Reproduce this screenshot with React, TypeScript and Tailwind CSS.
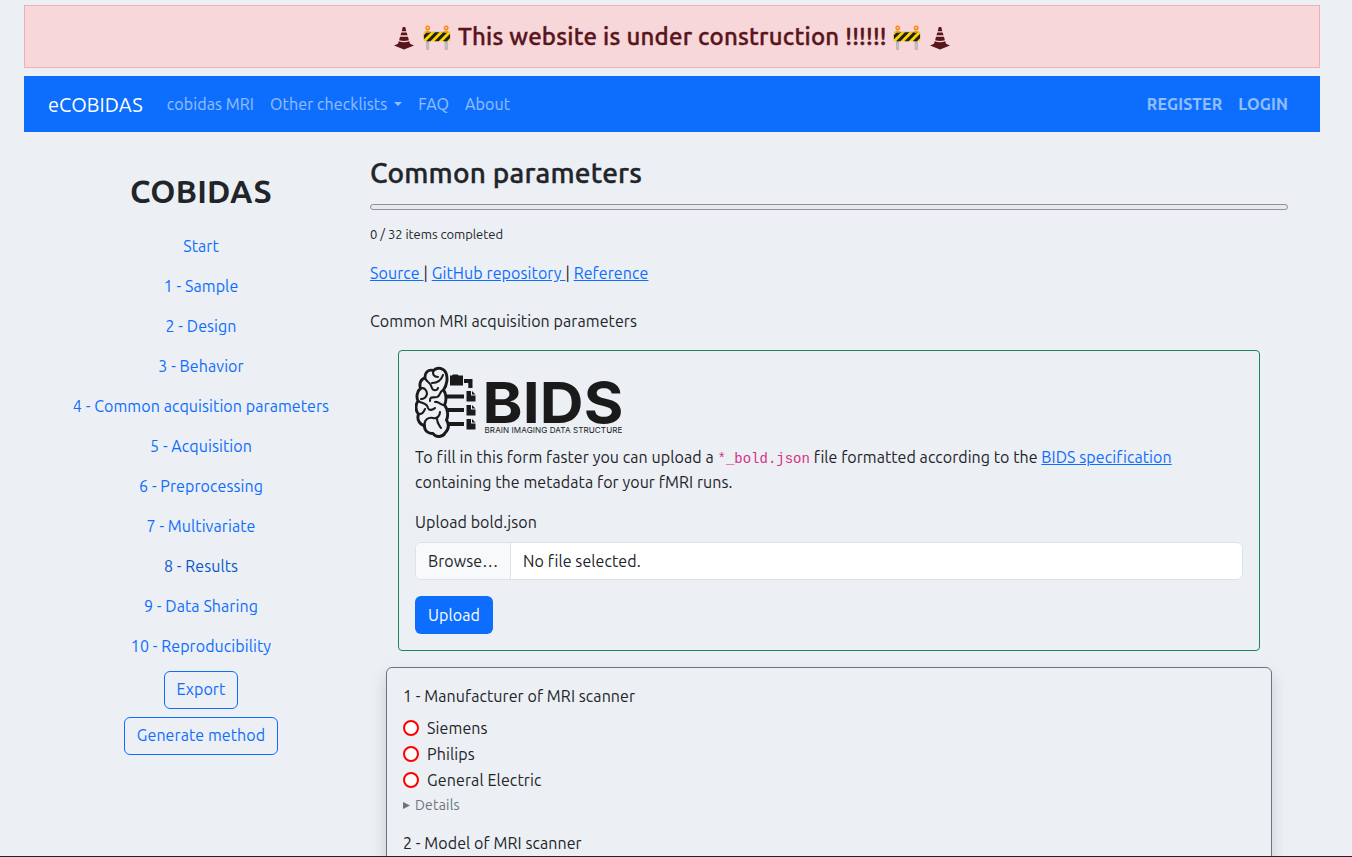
import React from "react";

const sections = [
  "Start",
  "1 - Sample",
  "2 - Design",
  "3 - Behavior",
  "4 - Common acquisition parameters",
  "5 - Acquisition",
  "6 - Preprocessing",
  "7 - Multivariate",
  "8 - Results",
  "9 - Data Sharing",
  "10 - Reproducibility",
];

function Cone() {
  return (
    <svg width="20" height="24" viewBox="0 0 20 24" fill="currentColor" className="relative top-px">
      <path d="M8.800 1h2.400l1.100 4.200H7.700zM7.300 6.500h5.400l.8 2.700h-7zM5.200 14.200 6 10.700h8l.8 3.500q-4.800 1.400-9.600 0z" />
      <path d="M4.800 15.300q5.200 1.800 10.400 0L16 17.800l4 1.700-10 4L0 19.500l4-1.700z" />
    </svg>
  );
}

function FileIcon({ y }: { y: number }) {
  return (
    <g>
      <path d={`M51.500 ${y}h4.500v4.500h4.500v6h-9z`} />
      <path d={`M57 ${y}l3.500 3.500h-3.500z`} />
    </g>
  );
}

function BidsLogo() {
  return (
    <svg width="210" height="74" viewBox="0 0 210 74" fill="#1a1a1a" className="relative -top-px block">
      <g fill="none" stroke="#1a1a1a" strokeWidth="2.900" strokeLinecap="round" strokeLinejoin="round">
        <path d="M31 7C29 2 22 .5 18.500 4.500C13 3 9.500 7 10 12C5.500 13 4 18 5.500 22.500C2 25 1 31 3 35C0 39 .5 45 3.500 48C1.500 54 5 59 9.500 59.500C9 65 14 68 18 67.500C21 72 28 71 30 67C34 63 34 58 31.500 54C34 49 32 42 29.500 39C32 34 31 27 28.500 24C32 19 33 12 31 7Z" />
        <g strokeWidth="2.100">
          <path d="M18.500 4.500C17 8 19 11 23 11M28 9C26 15 22 17 17 17M10 12C12 17 16 16 17 22C18 25 22 25 23 22" />
          <path d="M5.500 22.500C9 21 12 24 12 28C11 32 8 33 6 33M28.500 24C24 25 26 30 22 31C17 32 15 30 15 35" />
          <path d="M3 35C8 38 12 37 13 42C14 45 18 44 20 42M29.500 39C25 39 24 35 20 36M3.500 48C8 49 9 45 10 43" />
          <path d="M9.500 59.500C9 54 13 51 18 52C22 53 25 50 25 46M22 53C22 57 24 59 26 62" />
        </g>
      </g>
      <path d="M35 10.500v-1h2l.8-1h5l.8 1H48v10H35zM49 13h8.500v9h-4.200v-5H49z" />
      <path d="M31 28.500h18v4H31zM32 42h17v4H32zM32 56h17v4H32z" />
      <FileIcon y={25} />
      <FileIcon y={39} />
      <FileIcon y={53} />
      <text x="67.500" y="56.500" fontFamily="Inter, sans-serif" fontWeight="700" fontSize="57" textLength="141" lengthAdjust="spacingAndGlyphs">
        BIDS
      </text>
      <text x="69.500" y="66.800" fontFamily="Inter, sans-serif" fontWeight="400" fontSize="8" textLength="138" lengthAdjust="spacingAndGlyphs">
        BRAIN IMAGING DATA STRUCTURE
      </text>
    </svg>
  );
}

export default function App() {
  return (
    <div className="flex h-[857px] flex-col overflow-hidden bg-[#eceff4] font-['Ubuntu','Noto_Sans',sans-serif] text-base tracking-[0.08px] text-[#212529]">
      <div className="h-[856px] shrink-0 overflow-hidden pr-8 pl-6 pt-[5px]">
        <div className="flex h-[63px] items-center justify-center border border-[#f1aeb5] bg-[#f8d7da] text-2xl font-medium tracking-[0.22px] text-[#58151c]">
          <Cone />
          <span className="ml-[9px] w-7 text-2xl tracking-normal -indent-px">🚧</span>
          <h1 className="mx-1.5 w-[430px] pl-px whitespace-nowrap [-webkit-text-stroke:0.4px_#58151c]">This website is under construction !!!!!!</h1>
          <span className="mr-[9px] w-7 text-2xl tracking-normal -indent-px">🚧</span>
          <Cone />
        </div>

        <nav className="mt-2 flex h-14 items-center bg-[#0d6efd] px-6 text-white/55">
          <a className="mr-6 pt-0.5 text-xl text-white">eCOBIDAS</a>
          <div className="flex gap-4 tracking-[0.1px]">
            <a>cobidas MRI</a>
            <a className="flex items-center gap-[7px]">
              Other checklists
              <i className="border-x-[4.500px] border-t-[4.500px] border-x-transparent border-t-white/55" />
            </a>
            <a>FAQ</a>
            <a>About</a>
          </div>
          <div className="mr-2 ml-auto flex gap-4 font-bold tracking-[0.16px]">
            <a>REGISTER</a>
            <a>LOGIN</a>
          </div>
        </nav>

        <div className="flex">
          <aside className="flex w-[354px] shrink-0 flex-col items-center pt-10 text-[#0d6efd]">
            <h2 className="mb-[15px] text-[32px] leading-[39px] font-bold tracking-[0.3px] text-[#212529]">COBIDAS</h2>
            {sections.map((s) => (
              <a key={s} className={s.startsWith("8") ? "py-2 text-[#0a58ca]" : "py-2"}>
                {s}
              </a>
            ))}
            <button className="mt-[5px] h-[38px] w-[74px] rounded-md border border-[#0d6efd] pb-0.5">Export</button>
            <button className="mt-2 h-[38px] w-[154px] rounded-md border border-[#0d6efd] pb-0.5">Generate method</button>
          </aside>

          <main className="-ml-2 w-[902px] grow pt-6 pr-8">
            <h2 className="text-[28px] leading-[34px] font-medium tracking-[0.18px] [-webkit-text-stroke:0.4px_#212529]">Common parameters</h2>
            <div className="mt-3.5 h-1.5 rounded-full border border-[#8f8f9d] bg-[#e9e9ed]" />
            <p className="mt-3.5 text-[13px] leading-5 tracking-[-0.04px]">0 / 32 items completed</p>
            <p className="mt-[17px] leading-6 tracking-[0.1px]">
              <a className="whitespace-pre text-[#0d6efd] underline">Source </a>|{" "}
              <a className="whitespace-pre text-[#0d6efd] underline">GitHub repository </a>|{" "}
              <a className="text-[#0d6efd] underline">Reference</a>
            </p>
            <p className="mt-6">Common MRI acquisition parameters</p>

            <section className="mx-7 mt-[17px] h-[301px] rounded border border-[#198754] px-4 pt-4">
              <BidsLogo />
              <p className="mt-1 leading-[25px]">
                To fill in this form faster you can upload a{" "}
                <code className="font-['Liberation_Mono',monospace] text-sm tracking-normal text-[#d63384]">*_bold.json</code>{" "}
                <span className="tracking-[0.05px]">file formatted according to the </span>
                <a className="text-[#0d6efd] underline">BIDS specification</a>
                <br />
                containing the metadata for your fMRI runs.
              </p>
              <p className="mt-[15px]">Upload bold.json</p>
              <div className="mt-2 flex h-[38px] items-center overflow-hidden rounded-md border border-[#dee2e6] bg-white">
                <span className="flex h-full w-[95px] items-center border-r border-[#dee2e6] bg-[#f8f9fa] pl-3">Browse…</span>
                <span className="pl-3">No file selected.</span>
              </div>
              <button className="mt-4 h-[38px] w-[78px] rounded-md bg-[#0d6efd] text-white">Upload</button>
            </section>

            <section className="mx-4 mt-4 h-[400px] rounded-md border border-[#6c757d] px-4 pt-4 shadow-[0_8px_16px_rgba(0,0,0,0.15)]">
              <p>1 - Manufacturer of MRI scanner</p>
              <div className="mt-[7px] flex flex-col">
                {["Siemens", "Philips", "General Electric"].map((o) => (
                  <label key={o} className="flex h-[26px] items-center gap-2 tracking-[0.12px]">
                    <i className="size-4 rounded-full border-2 border-[#ff0000] bg-white" />
                    {o}
                  </label>
                ))}
              </div>
              <p className="flex h-6 items-center gap-[5px] text-sm tracking-[0.2px] text-[#6c757d]">
                <svg width="7" height="7" viewBox="0 0 7 7" fill="currentColor">
                  <path d="M0 0l7 3.500-7 3.500z" />
                </svg>
                Details
              </p>
              <p className="mt-3.5">2 - Model of MRI scanner</p>
            </section>
          </main>
        </div>
      </div>
      <div className="h-px shrink-0 bg-[#3b1520]" />
    </div>
  );
}
